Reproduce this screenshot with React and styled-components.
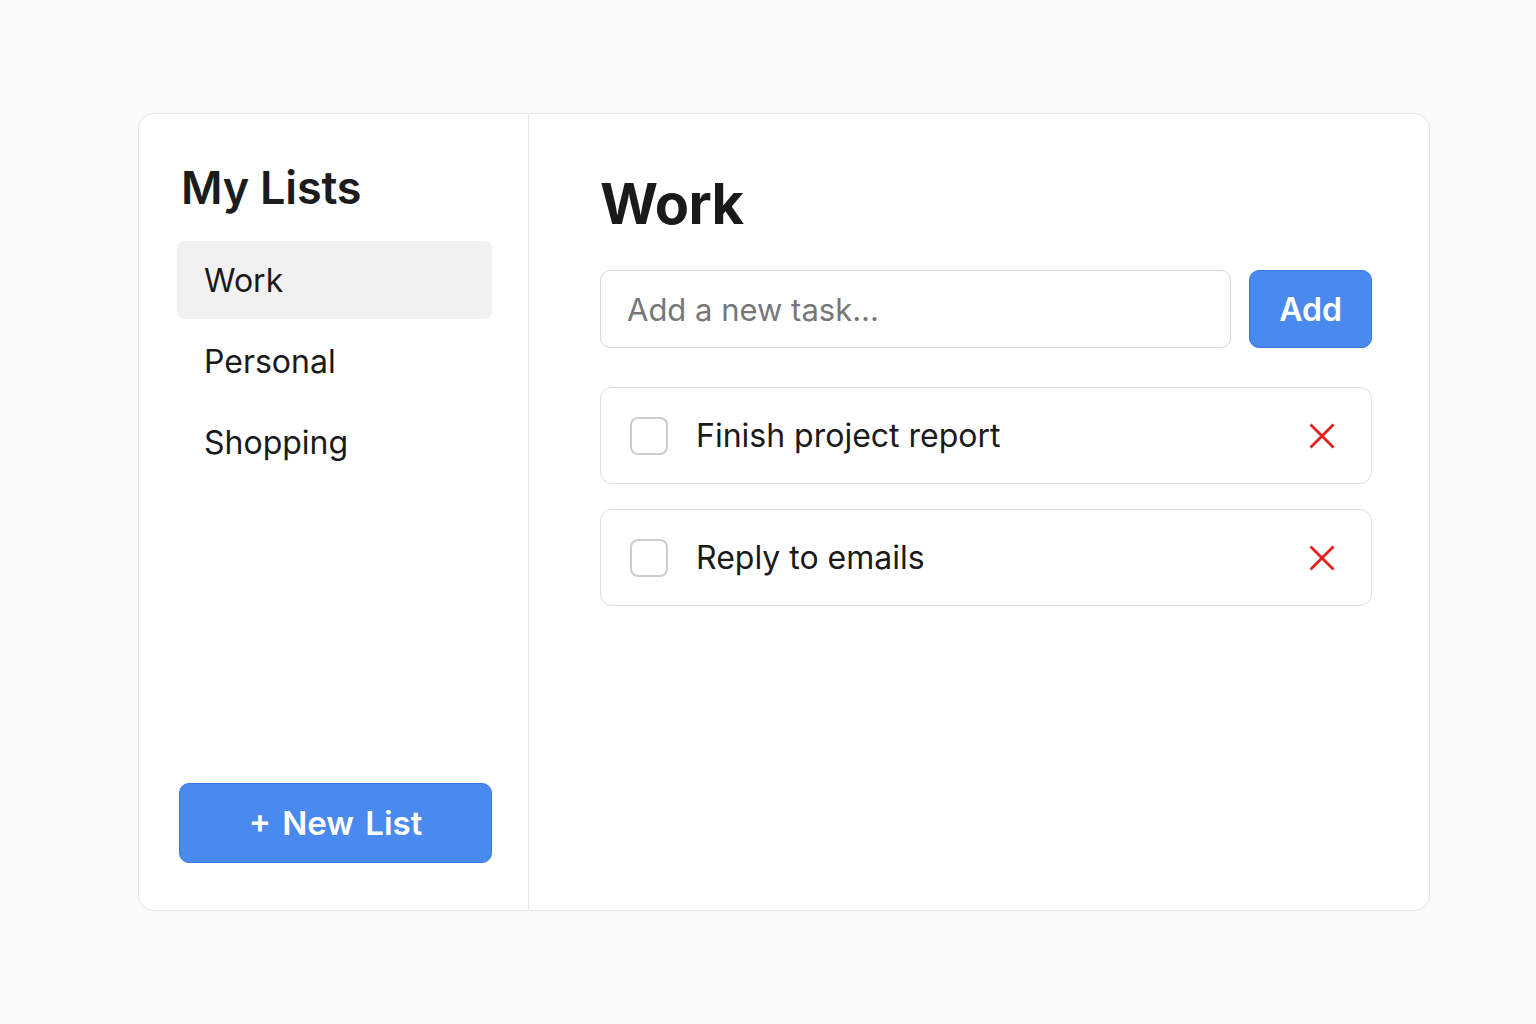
import styled, { createGlobalStyle } from "styled-components";

const GlobalStyle = createGlobalStyle`
  body {
    margin: 0;
    background: #fafafa;
    font-family: "Inter", "Noto Sans", sans-serif;
    color: #1c1c1c;
  }
`;

const Page = styled.div`
  width: 1536px;
  height: 1024px;
  padding: 113px 0 0 138px;
  box-sizing: border-box;
`;

const Card = styled.div`
  width: 1292px;
  height: 798px;
  box-sizing: border-box;
  display: flex;
  background: #ffffff;
  border: 1.5px solid #e4e4e4;
  border-radius: 16px;
  overflow: hidden;
`;

const Sidebar = styled.aside`
  width: 390px;
  box-sizing: border-box;
  border-right: 1.5px solid #e6e6e6;
  padding: 44px 36px 47px 38px;
  display: flex;
  flex-direction: column;
`;

const SideTitle = styled.h2`
  margin: 0 0 23px 4px;
  font-size: 45px;
  font-weight: 600;
  line-height: 60px;
  letter-spacing: -0.2px;
  color: #1c1c1c;
`;

const ListItem = styled.div`
  height: 78px;
  display: flex;
  align-items: center;
  padding-left: 27px;
  border-radius: 8px;
  font-size: 32px;
  background: ${(props) => (props.active ? "#f1f1f1" : "transparent")};
  color: #1a1a1a;
  margin-bottom: 3px;
`;

const NewListButton = styled.button`
  margin-top: auto;
  margin-left: 2px;
  height: 80px;
  border: 1.5px solid #3578e5;
  background: #4a89ee;
  color: #ffffff;
  border-radius: 10px;
  font-family: inherit;
  font-size: 33px;
  font-weight: 600;
  word-spacing: 3px;
  cursor: pointer;
`;

const Main = styled.main`
  flex: 1;
  padding: 50px 57px 0 71px;
  display: flex;
  flex-direction: column;
`;

const Title = styled.h1`
  margin: 0 0 26px 0;
  font-size: 56px;
  font-weight: 700;
  line-height: 80px;
  letter-spacing: -0.6px;
  color: #1a1a1a;
`;

const AddRow = styled.div`
  display: flex;
  gap: 18px;
  margin-bottom: 39px;
`;

const TaskInput = styled.input`
  flex: 1;
  height: 78px;
  box-sizing: border-box;
  border: 1.5px solid #d7d7d7;
  border-radius: 10px;
  padding: 0 26px;
  font-family: inherit;
  font-size: 31px;
  color: #1a1a1a;
  outline: none;
  &::placeholder {
    color: #777777;
  }
`;

const AddButton = styled.button`
  width: 123px;
  height: 78px;
  border: 1.5px solid #3578e5;
  background: #4a89ee;
  color: #ffffff;
  border-radius: 10px;
  font-family: inherit;
  font-size: 32px;
  font-weight: 600;
  cursor: pointer;
`;

const TaskList = styled.div`
  display: flex;
  flex-direction: column;
  gap: 25px;
`;

const TaskRow = styled.div`
  height: 97px;
  box-sizing: border-box;
  border: 1.5px solid #dedede;
  border-radius: 12px;
  display: flex;
  align-items: center;
  padding: 0 36px 0 29px;
`;

const Checkbox = styled.span`
  width: 38px;
  height: 38px;
  box-sizing: border-box;
  border: 2px solid #cdcdcd;
  border-radius: 8px;
  flex-shrink: 0;
`;

const TaskText = styled.span`
  flex: 1;
  margin-left: 28px;
  font-size: 32px;
  color: #1a1a1a;
`;

const DeleteButton = styled.button`
  border: 0;
  background: transparent;
  padding: 0;
  width: 26px;
  height: 26px;
  display: flex;
  cursor: pointer;
`;

function CrossIcon() {
  return (
    <svg width="26" height="26" viewBox="0 0 26 26">
      <path
        d="M1.5 1.5 L24.5 24.5 M24.5 1.5 L1.5 24.5"
        stroke="#e3201b"
        strokeWidth="2.8"
        fill="none"
      />
    </svg>
  );
}

const lists = ["Work", "Personal", "Shopping"];
const tasks = ["Finish project report", "Reply to emails"];

function App() {
  return (
    <>
      <GlobalStyle />
      <Page>
        <Card>
          <Sidebar>
            <SideTitle>My Lists</SideTitle>
            {lists.map((name) => (
              <ListItem key={name} active={name === "Work"}>
                {name}
              </ListItem>
            ))}
            <NewListButton>+ New List</NewListButton>
          </Sidebar>
          <Main>
            <Title>Work</Title>
            <AddRow>
              <TaskInput placeholder="Add a new task..." />
              <AddButton>Add</AddButton>
            </AddRow>
            <TaskList>
              {tasks.map((task) => (
                <TaskRow key={task}>
                  <Checkbox />
                  <TaskText>{task}</TaskText>
                  <DeleteButton>
                    <CrossIcon />
                  </DeleteButton>
                </TaskRow>
              ))}
            </TaskList>
          </Main>
        </Card>
      </Page>
    </>
  );
}

export default App;
